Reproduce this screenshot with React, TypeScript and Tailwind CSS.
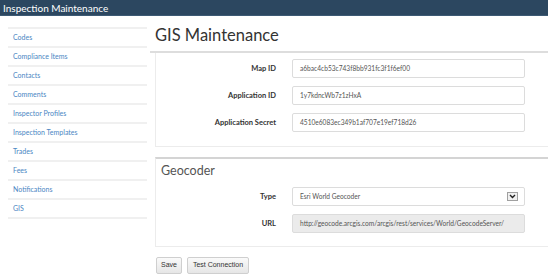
import React from "react";

const navItems = [
  "Codes",
  "Compliance Items",
  "Contacts",
  "Comments",
  "Inspector Profiles",
  "Inspection Templates",
  "Trades",
  "Fees",
  "Notifications",
  "GIS",
];

const Field = ({ label, value, disabled }: { label: string; value: string; disabled?: boolean }) => (
  <div className="flex items-center h-[19px]">
    <label className="w-[120px] text-right font-bold text-[7.5px] text-[#333]">{label}</label>
    <div
      className={`ml-[16px] w-[233px] h-[19px] flex items-center pl-[7px] text-[6.6px] text-[#555] border border-[#dcdcdc] rounded-[2px] ${
        disabled ? "bg-[#ebebeb]" : "bg-white"
      }`}
    >
      {value}
    </div>
  </div>
);

const App = () => {
  return (
    <div className="w-[548px] h-[278px] overflow-hidden bg-white" style={{ fontFamily: "Lato, 'Open Sans', sans-serif" }}>
      <div className="h-[16px] bg-[#2c4760] border-b border-[#3d5a74] flex items-center pl-[3px]">
        <span className="text-white text-[10px] leading-none">Inspection Maintenance</span>
      </div>
      <div className="flex">
        <div className="w-[150px] pl-[8px] pr-[3px] pt-[11px]">
          <ul className="border-t-2 border-[#f0f0f0]">
            {navItems.map((n) => (
              <li key={n} className="h-[19px] flex items-center pl-[5px] border-b-2 border-[#f0f0f0] text-[7px] text-[#4a86c3]">
                {n}
              </li>
            ))}
          </ul>
        </div>
        <div className="flex-1">
          <h1 className="pl-[5px] h-[35px] flex items-center pt-[3px] text-[16.5px] text-[#333] leading-none">GIS Maintenance</h1>
          <div className="h-[2px] bg-[#dddddd]"></div>
          <div className="ml-[5px] border-l border-b border-[#ececec] pt-[6px] pb-[14px] flex flex-col gap-[8px]">
            <Field label="Map ID" value="a6bac4cb53c743f8bb931fc3f1f6ef00" />
            <Field label="Application ID" value="1y7kdncWb7z1zHxA" />
            <Field label="Application Secret" value="4510e6083ec349b1af707e19ef718d26" />
          </div>
          <div className="ml-[5px] mt-[10px] border-t-2 border-[#d4d4d4] border-l border-b border-l-[#ececec] border-b-[#ececec] pb-[13px]">
            <div className="h-[24px] flex items-center pl-[5px] text-[12.5px] text-[#555] leading-none">Geocoder</div>
            <div className="mt-[4px] flex flex-col gap-[8px]">
              <div className="flex items-center h-[19px]">
                <label className="w-[120px] text-right font-bold text-[7.5px] text-[#333]">Type</label>
                <div className="ml-[16px] w-[233px] h-[19px] flex items-center justify-between pl-[7px] pr-[6px] text-[6.6px] text-[#555] border border-[#dcdcdc] rounded-[2px] bg-white">
                  <span>Esri World Geocoder</span>
                  <span className="w-[11px] h-[9px] border border-[#a0a0a0] bg-[#f0f0f0] flex items-center justify-center">
                    <svg width="7" height="5" viewBox="0 0 7 5">
                      <path d="M1 1 L3.5 3.5 L6 1" stroke="#222" strokeWidth="1.4" fill="none" />
                    </svg>
                  </span>
                </div>
              </div>
              <Field label="URL" value="http://geocode.arcgis.com/arcgis/rest/services/World/GeocodeServer/" disabled />
            </div>
          </div>
          <div className="ml-[6px] mt-[10px] flex gap-[5px]" style={{ fontFamily: "'Liberation Sans', Arial, sans-serif" }}>
            <button className="h-[17px] w-[26px] text-[7px] text-[#333] border border-[#cfcfcf] rounded-[2px] bg-gradient-to-b from-[#fafafa] to-[#e6e6e6]">
              Save
            </button>
            <button className="h-[17px] w-[62px] text-[7px] text-[#333] border border-[#cfcfcf] rounded-[2px] bg-gradient-to-b from-[#fafafa] to-[#e6e6e6]">
              Test Connection
            </button>
          </div>
        </div>
      </div>
    </div>
  );
};

export default App;
